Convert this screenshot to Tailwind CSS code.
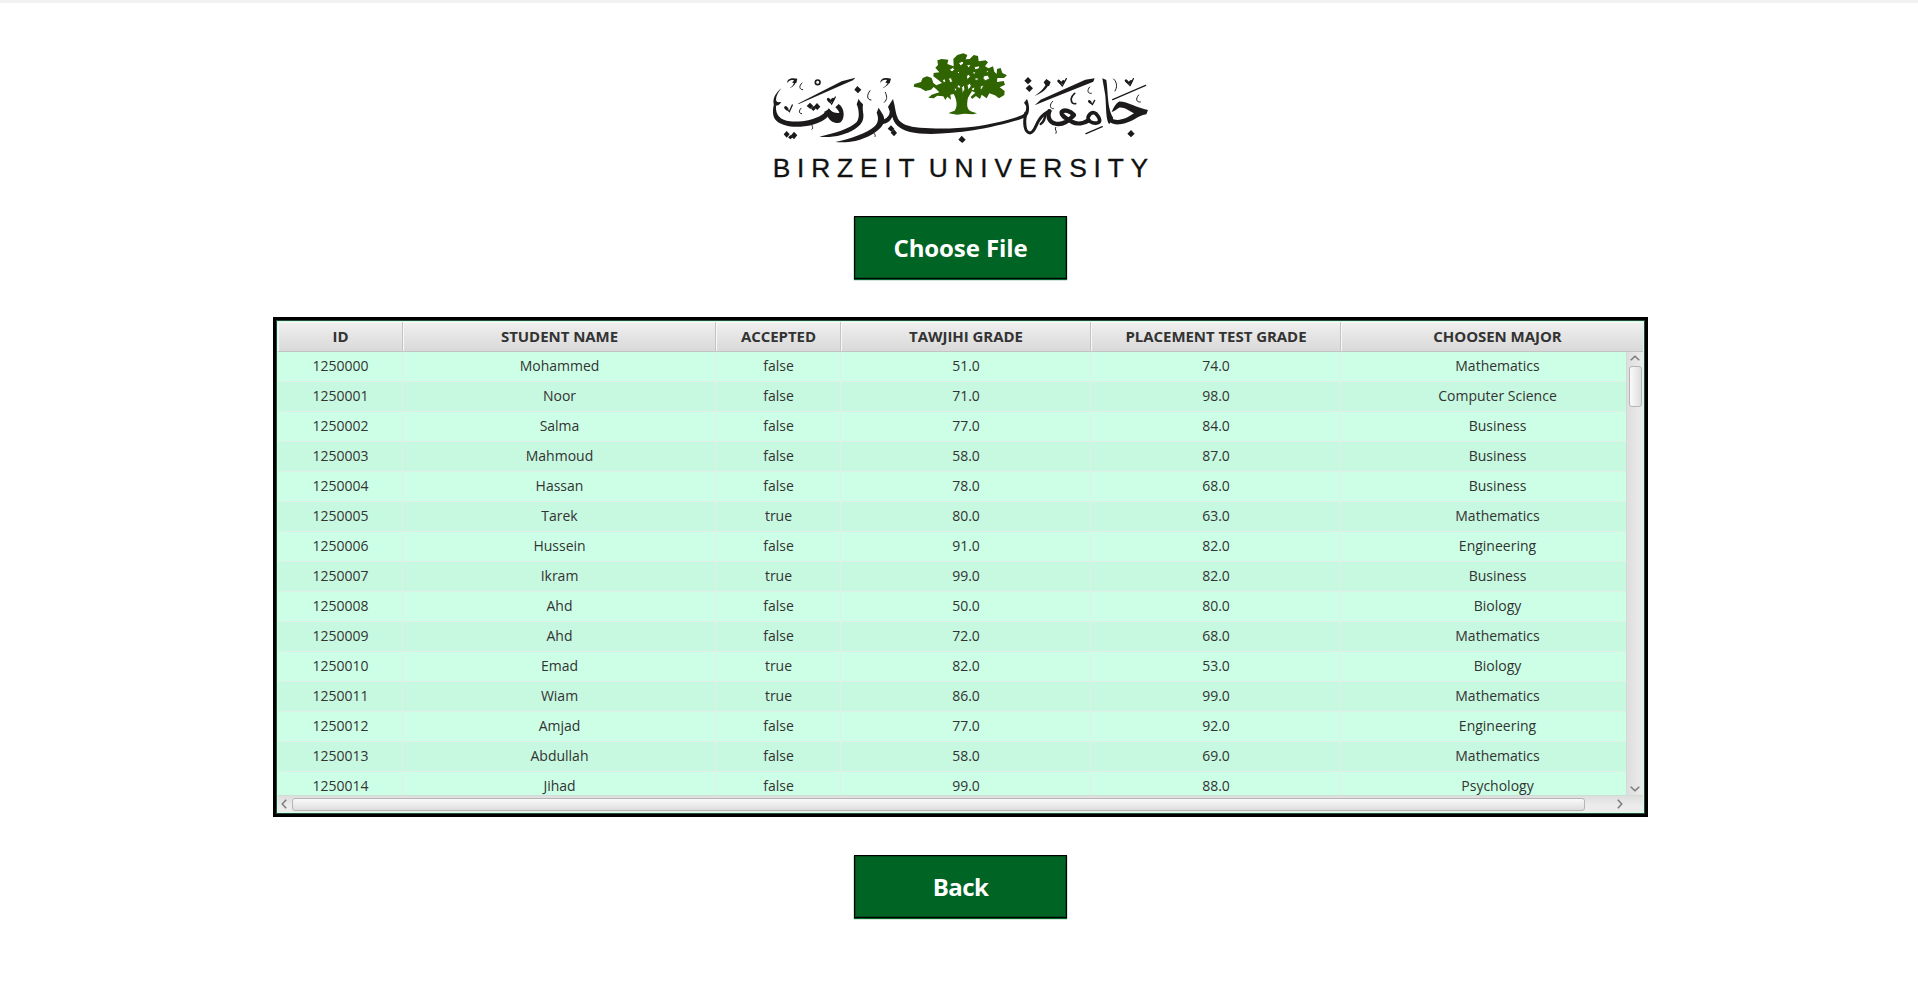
<!DOCTYPE html>
<html lang="en">
<head>
<meta charset="utf-8">
<title>Birzeit University - Students</title>
<script src="https://cdn.jsdelivr.net/npm/@tailwindcss/browser@4"></script>
</head>
<body class="bg-white font-['Open_Sans','Noto_Sans',sans-serif] text-[#333]">
<div class="flex h-[991px] w-full flex-col items-center overflow-hidden border-t-3 border-[#f2f2f2] pl-[3px]">

  <svg class="mt-[37px] mr-px h-[150px] w-[400px] shrink-0" viewBox="0 0 1200 450" fill="#1c1a1b" stroke="none" role="img" aria-label="Birzeit University">
    <!-- left half of the calligraphy -->
    <path d="M64 145C47 158 36 178 42 195C46 200 56 198 64 187L57 186C46 190 42 172 64 145Z"/>
    <path d="M42 192C37 212 37 232 50 243C72 263 118 264 158 254C180 249 196 240 207 226L222 221C214 214 210 210 206 205C204 212 196 217 186 224C160 241 120 247 90 244C62 241 46 226 48 198Z"/>
    <path d="M192 216L208 206C214 216 222 218 238 219C237 213 231 207 226 202L236 192C245 198 251 210 251 222C251 235 246 249 234 249C218 249 209 240 203 230Z"/>
    <path d="M113 191L245 124L286 113L279 121L258 130L118 191Z"/>
    <path d="M296 176C302 190 310 190 309 194C308 200 308 206 310 222C312 243 303 255 286 266C255 286 215 294 178 290C225 280 272 265 290 246C300 234 297 208 290 193Z"/>
    <path d="M356 203C364 218 376 228 372 246C366 268 330 290 300 299C275 306 250 308 226 306C272 297 320 280 345 258C356 246 356 232 350 218Z"/>
    <path d="M364 240C376 240 390 228 389 214L384 200L399 177C406 200 406 220 414 236C424 252 445 260 480 263C530 267 590 266 640 260C690 254 750 240 785 226C796 221 800 210 798 197L792 188L801 177C809 195 810 218 800 229C788 240 700 261 640 271C570 282 490 286 450 276C415 266 402 250 397 230C390 246 376 252 362 252Z"/>
    <g>
      <path d="M80 273L89 283L80 293L71 283ZM102 275L112 286L102 298L92 287ZM92 285L99 292L91 298L84 292ZM150 188L160 198L151 207L140 198ZM171 189L181 200L172 210L161 200ZM160 199L167 206L160 213L153 206Z"/>
      <path d="M292 138L304 149L294 160L283 149ZM393 256L403 266L394 275L383 266ZM402 268L411 279L402 289L392 278ZM605 287L617 299L607 309L595 299Z"/>
    </g>
    <path d="M82 129C80 116 95 112 112 116L109 129L96 128L102 121C95 118 87 120 82 129ZM361 129C361 114 376 112 393 116L389 130L376 128L381 120C372 118 366 121 361 129Z"/>
    <path d="M108 124C107 134 98 142 88 145C98 139 102 132 102 125ZM389 124C387 134 376 143 367 145C377 139 383 132 383 125Z"/>
    <circle cx="173" cy="127" r="7" fill="none" stroke="#1c1a1b" stroke-width="5"/>
    <g fill="none" stroke="#1c1a1b" stroke-width="3" stroke-linecap="round">
      <path d="M126 129C116 138 118 149 128 149M123 205C115 213 117 221 125 221M154 249C154 257 162 263 156 268M330 152C319 165 321 180 333 180M376 157C380 168 384 176 373 187M339 273C339 281 350 285 345 290"/>
      <path d="M76 202L88 215L97 195M204 178L215 192L226 171" stroke-width="4"/>
      <path d="M77 203L81 207M205 178L209 183M216 181L219 178" stroke-width="9"/>
    </g>

    <!-- right half of the calligraphy -->
    <g transform="translate(570 0)">
      <path d="M234 111L245 122L234 133L223 122ZM238 134L249 145L238 156L227 145ZM543 270L554 281L543 292L532 281Z"/>
      <path d="M289 117L302 126L297 139L286 135L281 127ZM297 133C288 150 272 162 253 168C270 158 281 147 288 133Z"/>
      <path d="M254 196L272 179L406 119L434 115L430 125L300 177Z"/>
      <path d="M457 115L469 120C472 140 472 160 475 185C478 210 484 225 490 234L478 252C465 240 470 180 464 155Z"/>
      <path d="M485 216C490 202 496 193 506 185C530 183 560 204 594 210L589 223C560 228 546 249 510 253C490 255 478 249 475 238L484 235C503 246 530 236 552 220C534 210 520 200 507 203C499 207 494 214 485 216Z"/>
      <g fill="none" stroke="#1c1a1b" stroke-linecap="round" stroke-linejoin="round">
        <path d="M227 220C221 250 224 278 240 279C254 278 258 252 268 239C276 227 286 218 300 213" stroke-width="9"/>
        <path d="M287 223C284 237 282 247 272 252" stroke-width="7"/>
        <path d="M298 214C290 235 302 251 325 252C344 252 358 241 372 225C361 213 343 207 335 216C333 229 354 238 367 246C382 254 402 250 416 241" stroke-width="13"/>
        <path d="M416 241C410 228 425 211 438 221C450 234 452 244 444 248C435 252 420 247 416 241Z" stroke-width="11"/>
        <path d="M408 281L457 260M488 179L587 136" stroke-width="4"/>
        <path d="M491 117C503 128 501 144 495 153" stroke-width="3"/>
        <path d="M419 141C410 151 413 162 424 160M308 184C297 194 300 207 310 206M566 165C555 177 560 188 571 186M317 262C312 270 323 272 318 280" stroke-width="3"/>
        <path d="M374 160C358 174 362 193 377 191" stroke-width="5"/>
        <path d="M325 123L337 138L349 116M527 122L540 137L550 116M417 183L427 194L434 181" stroke-width="4"/>
        <path d="M326 123L331 128M337 128L340 124M528 122L534 128M540 128L543 124M418 184L421 187" stroke-width="8"/>
      </g>
    </g>

    <!-- olive tree -->
    <g transform="translate(435 15)">
      <path fill="#2f6400" d="M131 205L136 202L149 197C158 185 156 165 146 147L136 149L138 164L127 155L121 165L115 154L97 152L86 160L70 158L80 149L103 142L94 133L86 126L78 134L61 138L46 129L26 125L28 117L48 111L53 99L66 94L80 99L85 114L94 121L111 114L99 104L85 94L86 84L103 82L91 68L99 60L97 46L110 42L130 44L127 57L146 64L145 42L157 30L175 25L187 30L182 43L194 42L206 30L219 33L221 49L242 46L249 52L240 64L251 70L264 64L268 80L275 87L276 72L287 69L292 84L306 91L297 99L277 99L276 111L296 108L300 119L284 127L299 138L298 150L282 160L270 151L253 145L245 160L230 149L225 162L213 153L201 162L197 155L211 143L201 138L189 158C183 185 188 195 201 200L216 205L204 208L178 206L157 209Z"/>
      <path fill="#fff" stroke="#2f6400" stroke-width="3" d="M133 74L144 67L149 74L141 81ZM161 55L171 48L177 54L167 63ZM184 61L198 57L192 70ZM207 66L222 62L224 70L210 75ZM112 105L119 101L123 110L116 113ZM130 100L139 98L143 110L135 113ZM158 119L167 122L164 131L156 126ZM148 128L155 131L155 139L148 136ZM170 127L177 120L180 132L172 147ZM184 93L192 87L196 95L187 104ZM186 121L195 114L199 123L190 136ZM201 128L210 126L208 136L200 137ZM211 98L221 100L218 106L209 105ZM235 93L249 90L254 101L242 107L234 102ZM226 124L237 119L232 131L225 135ZM201 83L212 78L209 89ZM244 75L252 80L244 85ZM156 82L164 78L163 88Z"/>
    </g>
    <g class="tracking-[20.5px]" font-family="Liberation Sans, Arial, sans-serif" font-size="79" fill="#111" stroke="#111" stroke-width="1">
      <text x="38" y="411">BIRZEIT</text>
      <text x="506" y="411">UNIVERSITY</text>
    </g>
  </svg>

  <button class="mt-[26px] h-[63px] w-[213px] shrink-0 border border-black bg-[#006425] text-2xl leading-[60px] font-bold tracking-[-0.1px] text-white shadow-[inset_0_0_0_1px_#004d1b,0_1px_1px_#006425]">Choose File</button>

  <main class="mt-[38px] h-[500px] w-[1375px] shrink-0 border-3 border-black">
    <div class="flex h-full flex-col border border-[#28493a] bg-[#ccffe6] p-px">
      <div id="head" class="flex h-[30px] shrink-0 overflow-hidden border-b border-[#c4c4c4] bg-linear-to-b from-[#f0f0f0] to-[#d9d9d9] text-[15px] leading-[28px] font-bold"></div>
      <div class="flex h-[443px] shrink-0">
        <div id="rows" class="w-[1348px] shrink-0 overflow-hidden text-[14px] leading-[27px]"></div>
        <div class="flex w-[17px] flex-col items-center border-l border-[#d2dcd6] bg-linear-to-r from-[#dedede] to-[#ececec]">
          <svg class="mt-[3px] h-[6px] w-[10px]" viewBox="0 0 10 6" fill="none" stroke="#777" stroke-width="1.4"><path d="M.7 5.2L5 1.2L9.3 5.2"/></svg>
          <div class="mt-[5px] h-[41px] w-[13px] rounded-[3px] border border-[#b5b5b5] bg-linear-to-r from-[#fafafa] to-[#dedede]"></div>
          <svg class="mt-auto mb-[3px] h-[6px] w-[10px]" viewBox="0 0 10 6" fill="none" stroke="#777" stroke-width="1.4"><path d="M.7 .8L5 4.8L9.3 .8"/></svg>
        </div>
      </div>
      <div class="flex h-[17px] shrink-0 items-center border-t border-[#d2dcd6] bg-linear-to-b from-[#dedede] to-[#ececec] to-60%">
        <svg class="ml-[3px] h-[10px] w-[6px]" viewBox="0 0 6 10" fill="none" stroke="#777" stroke-width="1.4"><path d="M5.2 .7L1.2 5L5.2 9.3"/></svg>
        <div class="ml-[5px] h-[13px] w-[1293px] rounded-[3px] border border-[#b5b5b5] bg-linear-to-b from-[#fafafa] to-[#dedede]"></div>
        <svg class="ml-[32px] h-[10px] w-[6px]" viewBox="0 0 6 10" fill="none" stroke="#777" stroke-width="1.4"><path d="M.8 .7L4.8 5L.8 9.3"/></svg>
      </div>
    </div>
  </main>

  <button class="mt-[38px] h-[63px] w-[213px] shrink-0 border border-black bg-[#006425] text-2xl leading-[60px] font-bold tracking-[-0.6px] text-white shadow-[inset_0_0_0_1px_#004d1b,0_1px_1px_#006425]">Back</button>
</div>
<script>
const widths = ['w-[125px]', 'w-[313px]', 'w-[125px]', 'w-[250px]', 'w-[250px]', 'w-[313px]'];
const heads = ['ID', 'STUDENT NAME', 'ACCEPTED', 'TAWJIHI GRADE', 'PLACEMENT TEST GRADE', 'CHOOSEN MAJOR'];
const data = [
  ['Mohammed', 'false', '51.0', '74.0', 'Mathematics'],
  ['Noor', 'false', '71.0', '98.0', 'Computer Science'],
  ['Salma', 'false', '77.0', '84.0', 'Business'],
  ['Mahmoud', 'false', '58.0', '87.0', 'Business'],
  ['Hassan', 'false', '78.0', '68.0', 'Business'],
  ['Tarek', 'true', '80.0', '63.0', 'Mathematics'],
  ['Hussein', 'false', '91.0', '82.0', 'Engineering'],
  ['Ikram', 'true', '99.0', '82.0', 'Business'],
  ['Ahd', 'false', '50.0', '80.0', 'Biology'],
  ['Ahd', 'false', '72.0', '68.0', 'Mathematics'],
  ['Emad', 'true', '82.0', '53.0', 'Biology'],
  ['Wiam', 'true', '86.0', '99.0', 'Mathematics'],
  ['Amjad', 'false', '77.0', '92.0', 'Engineering'],
  ['Abdullah', 'false', '58.0', '69.0', 'Mathematics'],
  ['Jihad', 'false', '99.0', '88.0', 'Psychology'],
];
document.getElementById('head').innerHTML = heads.map((h, i) =>
  `<div class="${widths[i]} shrink-0 border-r border-[#c4c4c4] pl-px text-center tracking-[-0.05px] shadow-[inset_1px_1px_0_#f8f8f8]">${h}</div>`).join('');
document.getElementById('rows').innerHTML = data.map((r, n) =>
  `<div class="flex h-[30px] border-b border-[#e3eee8] ${n % 2 ? 'bg-[#c7f8e0]' : 'bg-[#ccffe6]'}">` +
  [String(1250000 + n), ...r].map((c, i) =>
    `<div class="${widths[i]} shrink-0 border-r border-[#e3eee8] pl-px text-center">${c}</div>`).join('') + '</div>').join('');
</script>
</body>
</html>
